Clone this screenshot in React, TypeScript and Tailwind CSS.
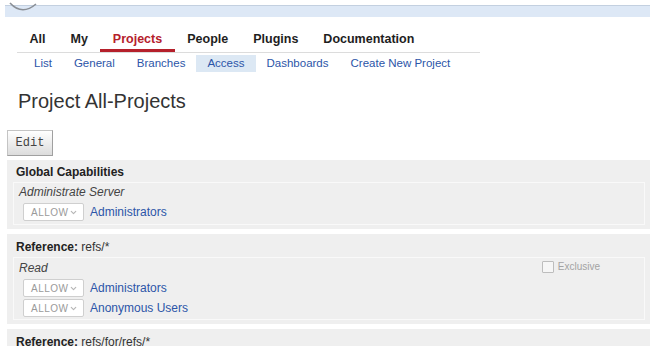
import { ChevronDown } from "lucide-react";

const mainTabs = ["All", "My", "Projects", "People", "Plugins", "Documentation"];
const subTabs = ["List", "General", "Branches", "Access", "Dashboards", "Create New Project"];

const AllowSelect = () => (
  <div className="flex items-center w-[61px] h-[18px] border border-[#cfcfcf] bg-white rounded-[2px] pl-[7px] pr-[5px] justify-between">
    <span className="text-[10px] tracking-[0.5px] text-[#9a9a9a]">ALLOW</span>
    <ChevronDown className="w-[9px] h-[9px] text-[#b5b5b5]" strokeWidth={3} />
  </div>
);

const RuleRow = ({ group }: { group: string }) => (
  <div className="flex items-center ml-[4px]">
    <AllowSelect />
    <a className="ml-[6px] text-[12px] text-[#2c55a8]">{group}</a>
  </div>
);

export default function App() {
  return (
    <div
      className="w-[650px] h-[346px] overflow-hidden bg-white text-[#333] relative"
      style={{ fontFamily: '"Liberation Sans", Arial, sans-serif' }}
    >
      {/* top header strip */}
      <div className="pt-[5px] pl-[5px]">
        <div className="h-[12px] border-t border-[#c3d0e0] bg-[#dde8f6]" />
      </div>
      <svg className="absolute left-[8px] top-0" width="32" height="14" viewBox="0 0 32 14">
        <path d="M2 3 Q14 16 28 4" fill="none" stroke="#8a8f96" strokeWidth="1.6" />
      </svg>

      {/* main nav */}
      <div className="ml-[17px] mt-[15px] w-[463px] flex border-b border-[#dcdcdc]">
        {mainTabs.map((t) => (
          <div
            key={t}
            className={
              t === "Projects"
                ? "px-[12.5px] pb-[2px] text-[12.5px] leading-[15px] font-bold text-[#b5202b] border-b-[3px] border-[#b5202b]"
                : "px-[12.5px] pb-[5px] text-[12.5px] leading-[15px] font-bold text-[#1e1e1e]"
            }
          >
            {t}
          </div>
        ))}
      </div>

      {/* sub nav */}
      <div className="ml-[23px] mt-[2px] flex">
        {subTabs.map((t) => (
          <div
            key={t}
            className={
              t === "Access"
                ? "px-[11px] h-[17px] leading-[17px] text-[11.5px] text-[#2c55a8] bg-[#dce8f4]"
                : "px-[11px] h-[17px] leading-[17px] text-[11.5px] text-[#2c55a8]"
            }
          >
            {t}
          </div>
        ))}
      </div>

      <h1 className="ml-[18px] mt-[17px] text-[20px] leading-[24px] text-[#333]">Project All-Projects</h1>

      <button
        className="ml-[7px] mt-[17px] h-[26px] w-[46px] border border-[#c4c4c4] border-b-[#a0a0a0] border-r-[#a0a0a0] bg-gradient-to-b from-white to-[#dcdcdc] text-[12px] text-[#444] flex items-center justify-center"
        style={{ fontFamily: '"Liberation Mono", "DejaVu Sans Mono", monospace' }}
      >
        Edit
      </button>

      {/* Global capabilities */}
      <div className="ml-[7px] mt-[4px] bg-[#efefef] pt-[4px] pb-[4px]">
        <div className="pl-[9px] text-[12px] leading-[16px] font-bold text-[#222]">Global Capabilities</div>
        <div className="mt-[2px] ml-[6px] mr-[5px] border border-[#f9f9f9] pl-[5px] pt-[2px] pb-[3px]">
          <div className="text-[12px] leading-[15px] italic text-[#444]">Administrate Server</div>
          <div className="mt-[3px]">
            <RuleRow group="Administrators" />
          </div>
        </div>
      </div>

      {/* refs/* */}
      <div className="ml-[7px] mt-[5px] bg-[#efefef] pt-[5px] pb-[4px]">
        <div className="pl-[9px] text-[12px] leading-[16px] text-[#333]">
          <span className="font-bold text-[#222]">Reference:</span> refs/*
        </div>
        <div className="mt-[2px] ml-[6px] mr-[5px] border border-[#f9f9f9] pl-[5px] pt-[1px] pb-[2px]">
          <div className="flex justify-between items-start">
            <div className="mt-[2px] text-[12px] leading-[15px] italic text-[#444]">Read</div>
            <div className="flex items-center mr-[44px]">
              <div className="w-[12px] h-[12px] border border-[#bdbdbd] bg-[#f6f6f6] rounded-[1px]" />
              <span className="ml-[4px] text-[10px] text-[#a3a3a3]">Exclusive</span>
            </div>
          </div>
          <div className="mt-[3px] flex flex-col gap-[2px]">
            <RuleRow group="Administrators" />
            <RuleRow group="Anonymous Users" />
          </div>
        </div>
      </div>

      {/* refs/for/refs/* */}
      <div className="ml-[7px] mt-[5px] bg-[#efefef] pt-[5px] h-[40px]">
        <div className="pl-[9px] text-[12px] leading-[16px] text-[#333]">
          <span className="font-bold text-[#222]">Reference:</span> refs/for/refs/*
        </div>
      </div>
    </div>
  );
}
